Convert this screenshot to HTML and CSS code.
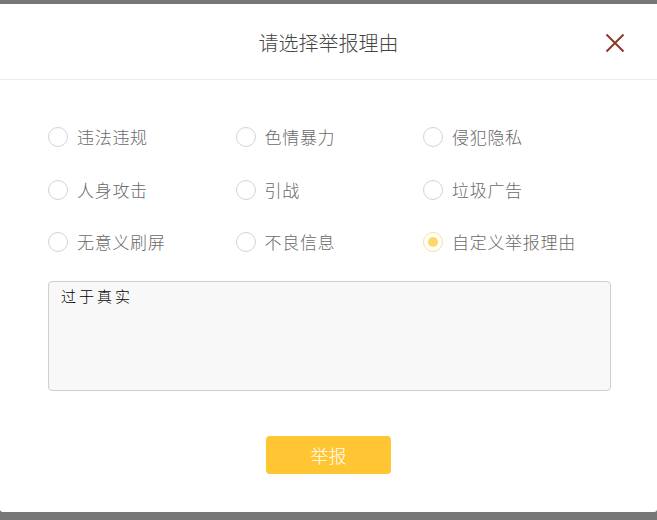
FILE: index.html
```html
<!DOCTYPE html>
<html lang="zh">
<head>
<meta charset="utf-8">
<title>举报</title>
<link rel="stylesheet" href="styles.css">
</head>
<body>
<div class="dialog">
  <div class="header">
    <span></span>
    <h1 class="title">请选择举报理由</h1>
    <button class="close" aria-label="关闭">
      <svg width="20" height="20" viewBox="0 0 20 20"><path d="M1.5 1.5L18.5 18.5M18.5 1.5L1.5 18.5" stroke="#8a3a29" stroke-width="2" fill="none"/></svg>
    </button>
  </div>
  <div class="content">
    <div class="options">
      <label class="option"><span class="radio"></span><span class="label">违法违规</span></label>
      <label class="option"><span class="radio"></span><span class="label">色情暴力</span></label>
      <label class="option"><span class="radio"></span><span class="label">侵犯隐私</span></label>
      <label class="option"><span class="radio"></span><span class="label">人身攻击</span></label>
      <label class="option"><span class="radio"></span><span class="label">引战</span></label>
      <label class="option"><span class="radio"></span><span class="label">垃圾广告</span></label>
      <label class="option"><span class="radio"></span><span class="label">无意义刷屏</span></label>
      <label class="option"><span class="radio"></span><span class="label">不良信息</span></label>
      <label class="option"><span class="radio checked"></span><span class="label">自定义举报理由</span></label>
    </div>
    <textarea class="reason">过于真实</textarea>
    <div class="actions">
      <button class="submit">举报</button>
    </div>
  </div>
</div>
</body>
</html>
```
FILE: styles.css
```css
html, body {
  margin: 0;
  padding: 0;
  background: #777777;
  height: 520px;
  overflow: hidden;
}
.dialog {
  margin-top: 4px;
  height: 508px;
  background: #ffffff;
  border-radius: 0 0 3px 3px;
  font-family: "Noto Sans CJK SC", "Noto Sans", sans-serif;
}
.header {
  height: 75px;
  border-bottom: 1px solid #ececec;
  display: grid;
  grid-template-columns: 1fr auto 1fr;
  align-items: center;
}
.title {
  margin: 0;
  font-size: 20px;
  font-weight: 300;
  color: #454545;
  line-height: 24px;
  padding-top: 2px;
}
.close {
  justify-self: end;
  margin-right: 32px;
  padding: 0;
  border: 0;
  background: none;
  width: 20px;
  height: 20px;
  display: flex;
  margin-top: 2px;
}
.content {
  padding: 31px 46px 0 48px;
}
.options {
  display: grid;
  grid-template-columns: 187.5px 187.5px 1fr;
  grid-auto-rows: 52.5px;
}
.option {
  display: flex;
  align-items: center;
  gap: 9px;
}
.radio {
  width: 18px;
  height: 18px;
  border: 1px solid #d3d3d3;
  border-radius: 50%;
  display: flex;
  align-items: center;
  justify-content: center;
  flex: none;
}
.radio.checked {
  border-color: #ffe08f;
}
.radio.checked::after {
  content: "";
  width: 10px;
  height: 10px;
  border-radius: 50%;
  background: #ffd766;
}
.label {
  font-size: 17px;
  font-weight: 300;
  letter-spacing: 0.7px;
  color: #6a6a6a;
  line-height: 24px;
}
.reason {
  display: block;
  box-sizing: border-box;
  width: 563px;
  height: 110px;
  margin-top: 12px;
  padding: 3px 12px;
  border: 1px solid #cfcfcf;
  border-radius: 4px;
  background: #f8f8f8;
  font-family: "Noto Sans CJK SC", sans-serif;
  font-size: 15px;
  font-weight: 300;
  letter-spacing: 3px;
  color: #000000;
  resize: none;
  outline: none;
}
.actions {
  display: flex;
  justify-content: center;
  margin-top: 45px;
  padding-right: 2px;
}
.submit {
  width: 125px;
  height: 38px;
  border: 0;
  border-radius: 4px;
  background: #ffc533;
  color: #ffffff;
  font-family: "Noto Sans CJK SC", sans-serif;
  font-size: 18px;
  font-weight: 300;
  padding: 0;
}
```
